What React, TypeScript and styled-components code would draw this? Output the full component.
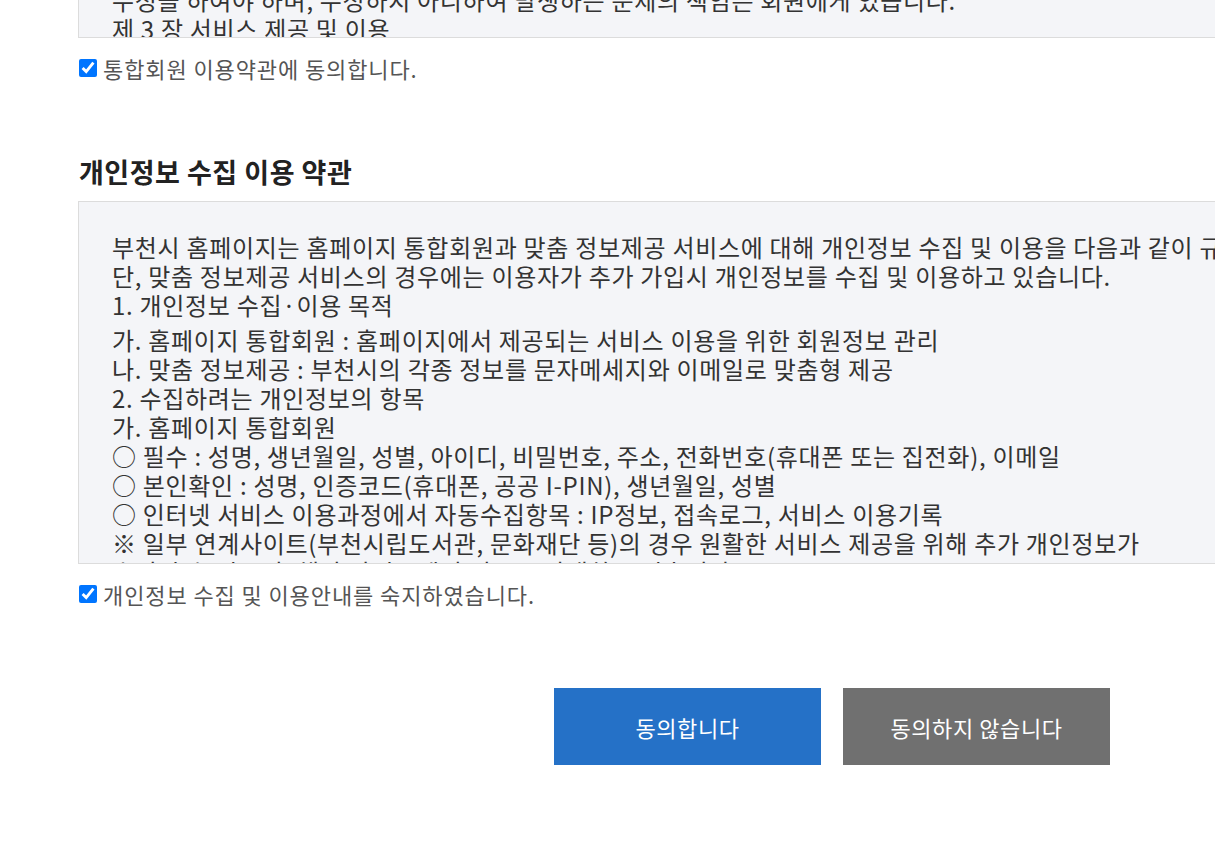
import React from 'react';
import styled, { createGlobalStyle } from 'styled-components';

const GlobalStyle = createGlobalStyle`
	html,
	body {
		margin: 0;
		padding: 0;
		background: #ffffff;
		overflow: hidden;
	}

	* {
		box-sizing: border-box;
	}
`;

const memberTermsTail = [
	'② 회원은 회원가입 시 등록한 사항에 변경이 있는 경우 회원정보 수정 화면에서 즉시',
	'수정을 하여야 하며, 수정하지 아니하여 발생하는 문제의 책임은 회원에게 있습니다.',
	'제 3 장 서비스 제공 및 이용',
];

const privacyLines: { text: string; gap?: boolean }[] = [
	{ text: '부천시 홈페이지는 홈페이지 통합회원과 맞춤 정보제공 서비스에 대해 개인정보 수집 및 이용을 다음과 같이 규정하고 있습니다.' },
	{ text: '단, 맞춤 정보제공 서비스의 경우에는 이용자가 추가 가입시 개인정보를 수집 및 이용하고 있습니다.' },
	{ text: '1. 개인정보 수집·이용 목적' },
	{ text: '가. 홈페이지 통합회원 : 홈페이지에서 제공되는 서비스 이용을 위한 회원정보 관리', gap: true },
	{ text: '나. 맞춤 정보제공 : 부천시의 각종 정보를 문자메세지와 이메일로 맞춤형 제공' },
	{ text: '2. 수집하려는 개인정보의 항목' },
	{ text: '가. 홈페이지 통합회원' },
	{ text: '○ 필수 : 성명, 생년월일, 성별, 아이디, 비밀번호, 주소, 전화번호(휴대폰 또는 집전화), 이메일' },
	{ text: '○ 본인확인 : 성명, 인증코드(휴대폰, 공공 I-PIN), 생년월일, 성별' },
	{ text: '○ 인터넷 서비스 이용과정에서 자동수집항목 : IP정보, 접속로그, 서비스 이용기록' },
	{ text: '※ 일부 연계사이트(부천시립도서관, 문화재단 등)의 경우 원활한 서비스 제공을 위해 추가 개인정보가' },
	{ text: '수집될 수 있으며, 해당 사이트에서 별도로 안내하고 있습니다.' },
	{ text: '나. 맞춤 정보제공' },
];

const App = (): JSX.Element => {
	return (
		<>
			<GlobalStyle />
			<Page>
				<TermsBox $height={38} $clipped>
					<TermsText $overflow={6}>
						{memberTermsTail.map((line) => (
							<TermsLine key={line}>{line}</TermsLine>
						))}
					</TermsText>
				</TermsBox>
				<CheckRow $top={14}>
					<input type='checkbox' defaultChecked />
					<span>통합회원 이용약관에 동의합니다.</span>
				</CheckRow>

				<SectionTitle>개인정보 수집 이용 약관</SectionTitle>
				<TermsBox $height={363}>
					<TermsText>
						{privacyLines.map((line) => (
							<TermsLine key={line.text} $gap={line.gap}>
								{line.text}
							</TermsLine>
						))}
					</TermsText>
				</TermsBox>
				<CheckRow $top={14}>
					<input type='checkbox' defaultChecked />
					<span>개인정보 수집 및 이용안내를 숙지하였습니다.</span>
				</CheckRow>

				<ButtonBar>
					<ActionButton $variant='agree'>동의합니다</ActionButton>
					<ActionButton $variant='decline'>동의하지 않습니다</ActionButton>
				</ButtonBar>
			</Page>
		</>
	);
};

const Page = styled.main`
	display: flex;
	flex-direction: column;
	width: 1586px;
	padding: 0 0 80px 78px;
	font-family: 'Noto Sans CJK KR', 'Noto Sans', sans-serif;
`;

const TermsBox = styled.div<{ $height: number; $clipped?: boolean }>`
	display: flex;
	flex-direction: column;
	justify-content: ${({ $clipped }) => ($clipped ? 'flex-end' : 'flex-start')};
	height: ${({ $height }) => $height}px;
	overflow: hidden;
	background: #f4f5f8;
	border: 1px solid #dcdcdc;
	border-top: ${({ $clipped }) => ($clipped ? 'none' : '1px solid #dcdcdc')};
	padding: ${({ $clipped }) => ($clipped ? '0 33px' : '30px 33px 0')};
`;

const TermsText = styled.div<{ $overflow?: number }>`
	display: flex;
	flex-direction: column;
	margin-bottom: ${({ $overflow }) => ($overflow ? -$overflow : 0)}px;
	color: #333333;
	font-size: 24px;
	letter-spacing: 0.7px;
	line-height: 29px;
`;

const TermsLine = styled.p<{ $gap?: boolean }>`
	margin: ${({ $gap }) => ($gap ? '6px' : '0')} 0 0;
	white-space: nowrap;
`;

const CheckRow = styled.label<{ $top: number }>`
	display: flex;
	align-items: center;
	gap: 6px;
	height: 32px;
	margin-top: ${({ $top }) => $top}px;
	color: #555555;
	font-size: 22px;
	letter-spacing: 0.9px;

	input {
		width: 18px;
		height: 18px;
		margin: 0 0 0 1px;
		accent-color: #0075ff;
	}
`;

const SectionTitle = styled.h2`
	margin: 70px 0 11px 1px;
	color: #222222;
	font-size: 27px;
	font-weight: 700;
	letter-spacing: 0.5px;
	line-height: 36px;
`;

const ButtonBar = styled.div`
	display: flex;
	justify-content: center;
	gap: 22px;
	margin-top: 78px;
`;

const ActionButton = styled.button<{ $variant: 'agree' | 'decline' }>`
	width: 267px;
	height: 77px;
	border: none;
	background: ${({ $variant }) => ($variant === 'agree' ? '#2571c7' : '#707070')};
	color: #ffffff;
	font-family: inherit;
	font-size: 22px;
	font-weight: 400;
	letter-spacing: 0.6px;
	cursor: pointer;
`;

export default App;
